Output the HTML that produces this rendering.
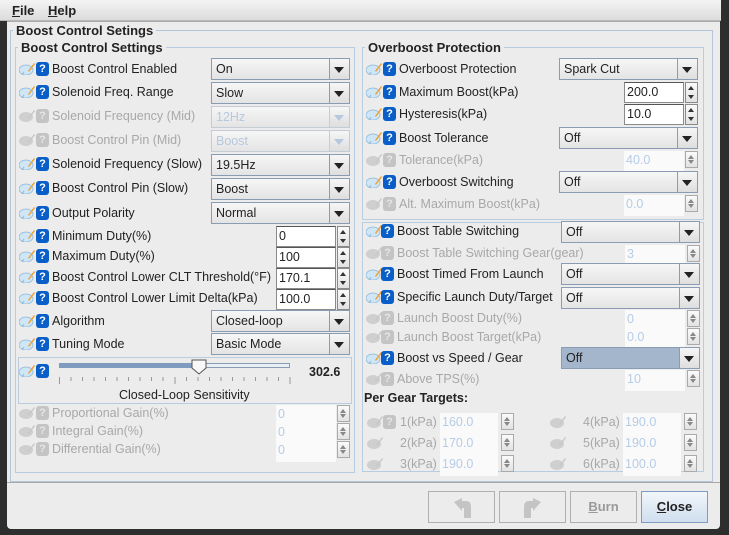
<!DOCTYPE html>
<html><head><meta charset="utf-8">
<style>
*{box-sizing:border-box;margin:0;padding:0}
body{width:729px;height:535px;overflow:hidden;background:#2e2e2e;font-family:"Liberation Sans","DejaVu Sans",sans-serif;font-size:12.5px;color:#222;position:relative}
.win{position:absolute;left:7px;top:0;width:713px;height:529px;background:#ececec;border-radius:0 0 4px 4px}
.menu{position:absolute;left:0;top:0;width:721px;height:21px;background:linear-gradient(#f4f4f4,#dcdcdc);border-bottom:1px solid #b8b8b8}
.menu span{position:absolute;top:3px;font-weight:bold;font-size:13px}
.a{position:absolute}
.fs{position:absolute;border:1px solid #b9cde0}
.tt{position:absolute;background:#ececec;font-weight:bold;font-size:13px;padding:0 3px;color:#222}
.lb{position:absolute;white-space:nowrap;line-height:20px}
.dis{color:#a8a8a8}
.ic{position:absolute;width:16px;height:13px}
.q{position:absolute;width:13px;height:14px;border-radius:3px;background:#0a5ec8;color:#fff;font-weight:bold;font-size:11px;text-align:center;line-height:14px}
.q.d{background:#c4c4c4;color:#e6e6e6}
.cb{position:absolute;height:22px;border:1px solid #8a9cb3;background:linear-gradient(#f6f6f6,#e4e4e4);line-height:20px;padding-left:4px}
.cb::after{content:"";position:absolute;right:0;top:0;width:19px;height:20px;border-left:1px solid #8a9cb3;background:linear-gradient(#f6f6f6,#dedede)}
.cb::before{content:"";position:absolute;right:5px;top:8px;border-left:5px solid transparent;border-right:5px solid transparent;border-top:6px solid #222;z-index:2}
.cb.d{border-color:#c6ccd6;color:#b6c8de}
.cb.d::after{border-left-color:#c6ccd6}
.cb.d::before{border-top-color:#b6c8de}
.sf{position:absolute;height:21px;background:#fff;border:1px solid #8a8a8a;border-top-color:#555;line-height:19px;padding-left:2px}
.sf.d{border:none;color:#b6cce6;background:#fafafa}
.ar{position:absolute;width:13px;height:21px;border:1px solid #8a8a8a;background:linear-gradient(#fafafa,#e2e2e2)}
.ar::before{content:"";position:absolute;left:2px;top:3px;border-left:3.5px solid transparent;border-right:3.5px solid transparent;border-bottom:4px solid #333}
.ar::after{content:"";position:absolute;left:2px;bottom:3px;border-left:3.5px solid transparent;border-right:3.5px solid transparent;border-top:4px solid #333}
.ar.d{border-color:#aaa}
.ar.d::before{border-bottom-color:#888}.ar.d::after{border-top-color:#888}
.btn{position:absolute;top:491px;height:32px;width:67px;border:1px solid #b0b0b0;background:#ececec;text-align:center;line-height:30px;font-weight:bold;font-size:13px;color:#9a9a9a}
</style></head><body>
<div class="menu"><span style="left:12px"><u>F</u>ile</span><span style="left:48px"><u>H</u>elp</span></div>
<div class="win" style="top:21px;height:508px"></div>
<div class="a" style="left:7px;top:21px;width:713px;height:1px;background:#aaa"></div>

<!-- outer fieldset -->
<div class="fs" style="left:10px;top:30px;width:703px;height:452px;border-color:#b4c6da"></div>
<div class="tt" style="left:13px;top:23px">Boost Control Setings</div>
<div class="a" style="left:7px;top:482px;width:713px;height:1px;background:#a8a8a8"></div>

<!-- left fieldset -->
<div class="fs" style="left:15px;top:47px;width:340px;height:426px"></div>
<div class="tt" style="left:18px;top:40px">Boost Control Settings</div>

<!-- right fieldset -->
<div class="fs" style="left:362px;top:47px;width:342px;height:173px"></div>
<div class="tt" style="left:365px;top:40px">Overboost Protection</div>
<div class="fs" style="left:362px;top:222px;width:342px;height:250px"></div>

<svg width="0" height="0" style="position:absolute"><defs>
<g id="pen"><ellipse cx="7" cy="8" rx="7" ry="5" fill="#cfe6f6" stroke="#8fb8d8" stroke-width=".8"/><path d="M3 13 L5 10" stroke="#8fb8d8"/><path d="M9 9 L15 1 L16 2 L10 10Z" fill="#f0a030"/></g>
<g id="pend"><ellipse cx="7" cy="8" rx="7" ry="5" fill="#cfcfcf"/><path d="M9 9 L15 1 L16 2 L10 10Z" fill="#c8c8c8"/></g>
</defs></svg>

<!-- LEFT ROWS -->
<div id="L">
<!-- row helper positions: icon x19, q x36, label x52 -->
<svg class="ic" style="left:19px;top:62px"><use href="#pen"/></svg><div class="q" style="left:36px;top:62px">?</div><div class="lb" style="left:52px;top:59px">Boost Control Enabled</div><div class="cb" style="left:211px;top:58px;width:139px">On</div>
<svg class="ic" style="left:19px;top:85px"><use href="#pen"/></svg><div class="q" style="left:36px;top:85px">?</div><div class="lb" style="left:52px;top:82px">Solenoid Freq. Range</div><div class="cb" style="left:211px;top:82px;width:139px">Slow</div>
<svg class="ic" style="left:19px;top:109px"><use href="#pend"/></svg><div class="q d" style="left:36px;top:109px">?</div><div class="lb dis" style="left:52px;top:106px">Solenoid Frequency (Mid)</div><div class="cb d" style="left:211px;top:106px;width:139px">12Hz</div>
<svg class="ic" style="left:19px;top:133px"><use href="#pend"/></svg><div class="q d" style="left:36px;top:133px">?</div><div class="lb dis" style="left:52px;top:130px">Boost Control Pin (Mid)</div><div class="cb d" style="left:211px;top:130px;width:139px">Boost</div>
<svg class="ic" style="left:19px;top:157px"><use href="#pen"/></svg><div class="q" style="left:36px;top:157px">?</div><div class="lb" style="left:52px;top:154px">Solenoid Frequency (Slow)</div><div class="cb" style="left:211px;top:154px;width:139px">19.5Hz</div>
<svg class="ic" style="left:19px;top:181px"><use href="#pen"/></svg><div class="q" style="left:36px;top:181px">?</div><div class="lb" style="left:52px;top:178px">Boost Control Pin (Slow)</div><div class="cb" style="left:211px;top:178px;width:139px">Boost</div>
<svg class="ic" style="left:19px;top:206px"><use href="#pen"/></svg><div class="q" style="left:36px;top:206px">?</div><div class="lb" style="left:52px;top:203px">Output Polarity</div><div class="cb" style="left:211px;top:202px;width:139px">Normal</div>

<svg class="ic" style="left:19px;top:229px"><use href="#pen"/></svg><div class="q" style="left:36px;top:229px">?</div><div class="lb" style="left:52px;top:226px">Minimum Duty(%)</div><div class="sf" style="left:276px;top:226px;width:60px">0</div><div class="ar" style="left:337px;top:226px"></div>
<svg class="ic" style="left:19px;top:249px"><use href="#pen"/></svg><div class="q" style="left:36px;top:249px">?</div><div class="lb" style="left:52px;top:246px">Maximum Duty(%)</div><div class="sf" style="left:276px;top:247px;width:60px">100</div><div class="ar" style="left:337px;top:247px"></div>
<svg class="ic" style="left:19px;top:270px"><use href="#pen"/></svg><div class="q" style="left:36px;top:270px">?</div><div class="lb" style="left:52px;top:267px">Boost Control Lower CLT Threshold(°F)</div><div class="sf" style="left:276px;top:268px;width:60px">170.1</div><div class="ar" style="left:337px;top:268px"></div>
<svg class="ic" style="left:19px;top:291px"><use href="#pen"/></svg><div class="q" style="left:36px;top:291px">?</div><div class="lb" style="left:52px;top:288px">Boost Control Lower Limit Delta(kPa)</div><div class="sf" style="left:276px;top:289px;width:60px">100.0</div><div class="ar" style="left:337px;top:289px"></div>

<svg class="ic" style="left:19px;top:314px"><use href="#pen"/></svg><div class="q" style="left:36px;top:314px">?</div><div class="lb" style="left:52px;top:311px">Algorithm</div><div class="cb" style="left:211px;top:310px;width:139px">Closed-loop</div>
<svg class="ic" style="left:19px;top:337px"><use href="#pen"/></svg><div class="q" style="left:36px;top:337px">?</div><div class="lb" style="left:52px;top:334px">Tuning Mode</div><div class="cb" style="left:211px;top:333px;width:139px">Basic Mode</div>

<!-- slider panel -->
<div class="fs" style="left:18px;top:357px;width:334px;height:47px"></div>
<svg class="ic" style="left:19px;top:364px"><use href="#pen"/></svg><div class="q" style="left:36px;top:364px">?</div>
<div class="a" style="left:59px;top:363px;width:231px;height:5px;border:1px solid #8a9cb3;background:#e8eef5"></div>
<div class="a" style="left:59px;top:363px;width:140px;height:5px;background:#7f9cc0"></div>
<svg class="a" style="left:191px;top:359px" width="16" height="16"><path d="M1 1 H15 V9 L8 15 L1 9Z" fill="#f8f8f8" stroke="#555"/></svg>
<svg class="a" style="left:59px;top:377px" width="234" height="8"><g stroke="#999"><path d="M0.5 0v7M12 0v4M23.5 0v4M35 0v4M46.5 0v4M58 0v4M69.5 0v4M81 0v4M92.5 0v4M104 0v4M116 0v7M127.5 0v4M139 0v4M150.5 0v4M162 0v4M173.5 0v4M185 0v4M196.5 0v4M208 0v4M219.5 0v4M231 0v7"/></g></svg>
<div class="lb" style="left:309px;top:362px;font-weight:bold">302.6</div>
<div class="lb" style="left:119px;top:385px">Closed-Loop Sensitivity</div>

<svg class="ic" style="left:19px;top:406px"><use href="#pend"/></svg><div class="q d" style="left:36px;top:406px">?</div><div class="lb dis" style="left:52px;top:403px">Proportional Gain(%)</div><div class="sf d" style="left:276px;top:405px;width:60px">0</div><div class="ar d" style="left:337px;top:405px;height:17px"></div>
<svg class="ic" style="left:19px;top:424px"><use href="#pend"/></svg><div class="q d" style="left:36px;top:424px">?</div><div class="lb dis" style="left:52px;top:421px">Integral Gain(%)</div><div class="sf d" style="left:276px;top:423px;width:60px">0</div><div class="ar d" style="left:337px;top:423px;height:17px"></div>
<svg class="ic" style="left:19px;top:442px"><use href="#pend"/></svg><div class="q d" style="left:36px;top:442px">?</div><div class="lb dis" style="left:52px;top:439px">Differential Gain(%)</div><div class="sf d" style="left:276px;top:441px;width:60px">0</div><div class="ar d" style="left:337px;top:441px;height:17px"></div>
</div>

<!-- RIGHT ROWS -->
<svg class="ic" style="left:366px;top:62px"><use href="#pen"/></svg><div class="q" style="left:383px;top:62px">?</div><div class="lb" style="left:399px;top:59px">Overboost Protection</div><div class="cb" style="left:559px;top:58px;width:139px">Spark Cut</div>
<svg class="ic" style="left:366px;top:85px"><use href="#pen"/></svg><div class="q" style="left:383px;top:85px">?</div><div class="lb" style="left:399px;top:82px">Maximum Boost(kPa)</div><div class="sf" style="left:624px;top:82px;width:60px">200.0</div><div class="ar" style="left:685px;top:82px"></div>
<svg class="ic" style="left:366px;top:107px"><use href="#pen"/></svg><div class="q" style="left:383px;top:107px">?</div><div class="lb" style="left:399px;top:104px">Hysteresis(kPa)</div><div class="sf" style="left:624px;top:104px;width:60px">10.0</div><div class="ar" style="left:685px;top:104px"></div>
<svg class="ic" style="left:366px;top:131px"><use href="#pen"/></svg><div class="q" style="left:383px;top:131px">?</div><div class="lb" style="left:399px;top:128px">Boost Tolerance</div><div class="cb" style="left:559px;top:127px;width:139px">Off</div>
<svg class="ic" style="left:366px;top:153px"><use href="#pend"/></svg><div class="q d" style="left:383px;top:153px">?</div><div class="lb dis" style="left:399px;top:150px">Tolerance(kPa)</div><div class="sf d" style="left:624px;top:151px;width:60px">40.0</div><div class="ar d" style="left:685px;top:151px;height:17px"></div>
<svg class="ic" style="left:366px;top:175px"><use href="#pen"/></svg><div class="q" style="left:383px;top:175px">?</div><div class="lb" style="left:399px;top:172px">Overboost Switching</div><div class="cb" style="left:559px;top:171px;width:139px">Off</div>
<svg class="ic" style="left:366px;top:197px"><use href="#pend"/></svg><div class="q d" style="left:383px;top:197px">?</div><div class="lb dis" style="left:399px;top:194px">Alt. Maximum Boost(kPa)</div><div class="sf d" style="left:624px;top:195px;width:60px">0.0</div><div class="ar d" style="left:685px;top:195px;height:17px"></div>

<svg class="ic" style="left:366px;top:224px"><use href="#pen"/></svg><div class="q" style="left:381px;top:224px">?</div><div class="lb" style="left:397px;top:221px">Boost Table Switching</div><div class="cb" style="left:561px;top:221px;width:139px">Off</div>
<svg class="ic" style="left:366px;top:246px"><use href="#pend"/></svg><div class="q d" style="left:381px;top:246px">?</div><div class="lb dis" style="left:397px;top:243px">Boost Table Switching Gear(gear)</div><div class="sf d" style="left:625px;top:245px;width:60px">3</div><div class="ar d" style="left:687px;top:245px;height:17px"></div>
<svg class="ic" style="left:366px;top:267px"><use href="#pen"/></svg><div class="q" style="left:381px;top:267px">?</div><div class="lb" style="left:397px;top:264px">Boost Timed From Launch</div><div class="cb" style="left:561px;top:263px;width:139px">Off</div>
<svg class="ic" style="left:366px;top:290px"><use href="#pen"/></svg><div class="q" style="left:381px;top:290px">?</div><div class="lb" style="left:397px;top:287px">Specific Launch Duty/Target</div><div class="cb" style="left:561px;top:287px;width:139px">Off</div>
<svg class="ic" style="left:366px;top:311px"><use href="#pend"/></svg><div class="q d" style="left:381px;top:311px">?</div><div class="lb dis" style="left:397px;top:308px">Launch Boost Duty(%)</div><div class="sf d" style="left:625px;top:310px;width:60px">0</div><div class="ar d" style="left:687px;top:310px;height:17px"></div>
<svg class="ic" style="left:366px;top:330px"><use href="#pend"/></svg><div class="q d" style="left:381px;top:330px">?</div><div class="lb dis" style="left:397px;top:327px">Launch Boost Target(kPa)</div><div class="sf d" style="left:625px;top:328px;width:60px">0.0</div><div class="ar d" style="left:687px;top:328px;height:17px"></div>
<svg class="ic" style="left:366px;top:351px"><use href="#pen"/></svg><div class="q" style="left:381px;top:351px">?</div><div class="lb" style="left:397px;top:348px">Boost vs Speed / Gear</div><div class="cb" style="left:561px;top:347px;width:139px;background:#a4b6cc">Off</div>
<svg class="ic" style="left:366px;top:372px"><use href="#pend"/></svg><div class="q d" style="left:381px;top:372px">?</div><div class="lb dis" style="left:397px;top:369px">Above TPS(%)</div><div class="sf d" style="left:625px;top:370px;width:60px">10</div><div class="ar d" style="left:687px;top:370px;height:17px"></div>

<div class="lb" style="left:364px;top:388px;font-weight:bold">Per Gear Targets:</div>

<svg class="ic" style="left:367px;top:415px"><use href="#pend"/></svg><div class="q d" style="left:383px;top:415px">?</div><div class="lb dis" style="left:400px;top:412px">1(kPa)</div><div class="sf d" style="left:440px;top:413px;width:58px">160.0</div><div class="ar d" style="left:501px;top:413px;height:17px"></div>
<svg class="ic" style="left:367px;top:436px"><use href="#pend"/></svg><div class="lb dis" style="left:400px;top:433px">2(kPa)</div><div class="sf d" style="left:440px;top:434px;width:58px">170.0</div><div class="ar d" style="left:501px;top:434px;height:17px"></div>
<svg class="ic" style="left:367px;top:457px"><use href="#pend"/></svg><div class="lb dis" style="left:400px;top:454px">3(kPa)</div><div class="sf d" style="left:440px;top:455px;width:58px">190.0</div><div class="ar d" style="left:501px;top:455px;height:17px"></div>
<svg class="ic" style="left:550px;top:415px"><use href="#pend"/></svg><div class="lb dis" style="left:583px;top:412px">4(kPa)</div><div class="sf d" style="left:623px;top:413px;width:58px">190.0</div><div class="ar d" style="left:684px;top:413px;height:17px"></div>
<svg class="ic" style="left:550px;top:436px"><use href="#pend"/></svg><div class="lb dis" style="left:583px;top:433px">5(kPa)</div><div class="sf d" style="left:623px;top:434px;width:58px">190.0</div><div class="ar d" style="left:684px;top:434px;height:17px"></div>
<svg class="ic" style="left:550px;top:457px"><use href="#pend"/></svg><div class="lb dis" style="left:583px;top:454px">6(kPa)</div><div class="sf d" style="left:623px;top:455px;width:58px">100.0</div><div class="ar d" style="left:684px;top:455px;height:17px"></div>

<!-- buttons -->
<div class="btn" style="left:428px"><svg width="24" height="24" style="margin-top:4px"><path d="M4 6 L12 2 V5 H16 Q21 5 21 11 V22 H14 V12 H12 V15Z" fill="#c4c4c4"/></svg></div>
<div class="btn" style="left:499px"><svg width="24" height="24" style="margin-top:4px"><path d="M20 6 L12 2 V5 H8 Q3 5 3 11 V22 H10 V12 H12 V15Z" fill="#c4c4c4"/></svg></div>
<div class="btn" style="left:570px"><u>B</u>urn</div>
<div class="btn" style="left:641px;border-color:#7d9cc0;background:linear-gradient(#f2f6fa,#cfdeee);color:#222"><u>C</u>lose</div>
</body></html>
